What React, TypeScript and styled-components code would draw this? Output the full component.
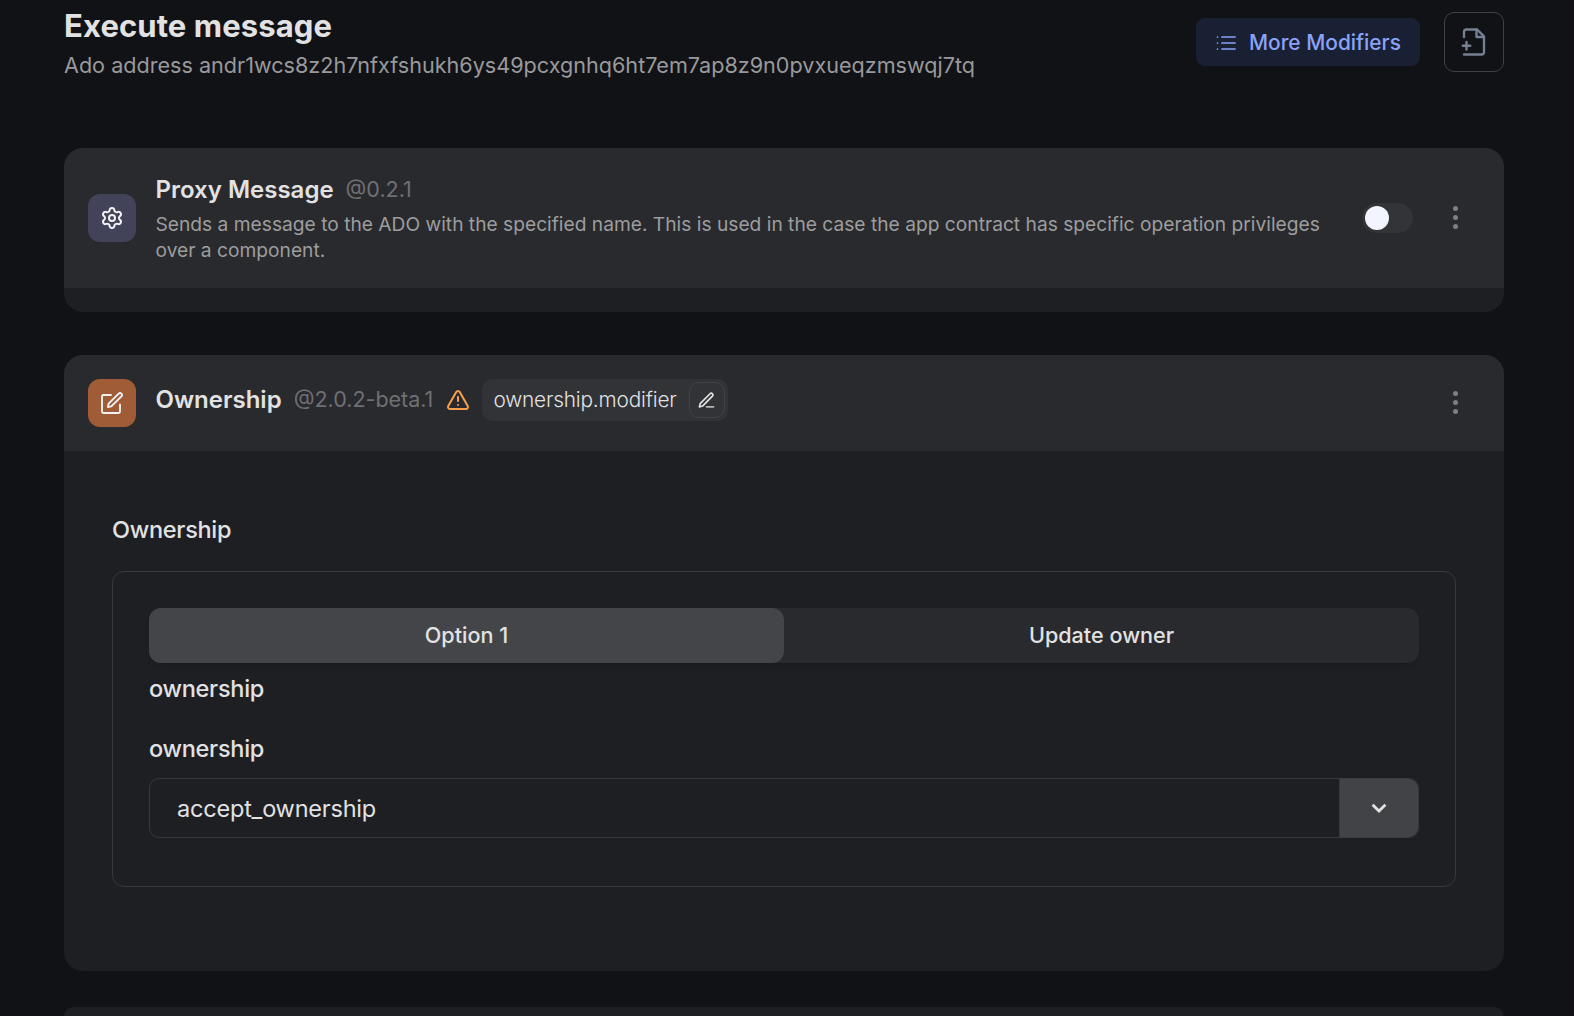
import React from "react";
import styled, { createGlobalStyle } from "styled-components";
import { Settings, TriangleAlert } from "lucide-react";

const GlobalStyle = createGlobalStyle`
  *, *::before, *::after { box-sizing: border-box; }
  html, body { margin: 0; background: #111216; }
  body {
    font-family: Inter, "Liberation Sans", sans-serif;
    color: #e2e2e3;
    overflow: hidden;
    -webkit-font-smoothing: antialiased;
  }
  button { font: inherit; color: inherit; border: 0; padding: 0; background: none; }
`;

const Page = styled.main`
  width: 1574px;
  height: 1016px;
  padding: 0 70px 0 64px;
  overflow: hidden;
`;

const TopBar = styled.header`
  display: flex;
  justify-content: space-between;
  height: 148px;
`;

const Heading = styled.h1`
  margin: 6px 0 0;
  font-size: 31px;
  line-height: 40px;
  font-weight: 700;
  letter-spacing: 0.1px;
`;

const Address = styled.p`
  margin: 3px 0 0;
  font-size: 21.6px;
  line-height: 32px;
  color: #99999b;
`;

const Actions = styled.div`
  display: flex;
  align-items: center;
  gap: 24px;
  height: 60px;
  margin-top: 12px;
`;

const ModifiersButton = styled.button`
  display: flex;
  align-items: center;
  width: 224px;
  height: 48px;
  padding: 1px 0 0 18px;
  gap: 11px;
  border-radius: 9px;
  background: #1a2033;
  color: #8aa3f9;
  font-size: 20.9px;
  font-weight: 500;
  white-space: nowrap;
`;

const OutlineButton = styled.button<{ $size: number; $tone: string }>`
  display: grid;
  place-items: center;
  flex: none;
  width: ${(p) => p.$size}px;
  height: ${(p) => p.$size}px;
  border: 1px solid #404145;
  border-radius: 10px;
  color: ${(p) => p.$tone};
`;

const Card = styled.section<{ $height: number; $gap: number; $radius?: number }>`
  height: ${(p) => p.$height}px;
  margin-bottom: ${(p) => p.$gap}px;
  border-radius: ${(p) => p.$radius ?? 19}px;
  background: #1e1f23;
  overflow: hidden;
`;

const CardHeader = styled.div<{ $height: number }>`
  display: flex;
  align-items: center;
  height: ${(p) => p.$height}px;
  padding: 0 39px 0 24px;
  background: #292a2d;
`;

const Tile = styled.div<{ $color: string }>`
  display: grid;
  place-items: center;
  flex: none;
  width: 48px;
  height: 48px;
  margin-right: 19.5px;
  border-radius: 12px;
  background: ${(p) => p.$color};
  color: #f1f1f4;
`;

const CardText = styled.div`
  flex: 1;
  min-width: 0;
`;

const NameRow = styled.div<{ $height: number; $lift?: number }>`
  display: flex;
  align-items: center;
  height: ${(p) => p.$height}px;
  margin-bottom: ${(p) => p.$lift ?? 0}px;
`;

const Name = styled.h2`
  margin: 0;
  font-size: 24px;
  line-height: 32px;
  font-weight: 600;
`;

const Version = styled.span`
  margin-left: 12px;
  padding-bottom: 2px;
  font-size: 21.5px;
  line-height: 32px;
  color: #6f7073;
`;

const Warning = styled(TriangleAlert)`
  flex: none;
  margin-left: 12.5px;
  color: #f6a04d;
`;

const Pill = styled.div`
  display: flex;
  align-items: center;
  justify-content: space-between;
  width: 246px;
  height: 42px;
  margin-left: 12px;
  padding: 0 3px 0 11.5px;
  border-radius: 10px;
  background: #323336;
  font-size: 20.8px;
  font-weight: 300;
  letter-spacing: -0.17px;
`;

const PillText = styled.span`
  padding-bottom: 1px;
`;

const Description = styled.p`
  margin: 0;
  font-size: 19.2px;
  line-height: 26px;
  color: #9d9d9f;
  white-space: nowrap;
`;

const Toggle = styled.button`
  display: flex;
  align-items: center;
  flex: none;
  width: 51px;
  height: 30px;
  margin-right: 33px;
  padding-left: 3px;
  border-radius: 15px;
  background: #333437;
`;

const Knob = styled.span`
  width: 24px;
  height: 24px;
  border-radius: 50%;
  background: #f2f4ff;
`;

const MenuButton = styled.button`
  display: flex;
  flex-direction: column;
  align-items: center;
  gap: 4px;
  width: 19px;
  padding-bottom: 1px;
`;

const Dot = styled.span`
  width: 5px;
  height: 5px;
  border-radius: 50%;
  background: #7e7f81;
`;

const CardBody = styled.div`
  padding: 63px 48px 0;
`;

const Label = styled.div`
  height: 32px;
  font-size: 23.5px;
  line-height: 32px;
  font-weight: 500;
  letter-spacing: -0.28px;
`;

const Fieldset = styled.div`
  height: 316px;
  margin-top: 25px;
  padding: 36px;
  border: 1px solid #38393c;
  border-radius: 12px;
`;

const Tabs = styled.div`
  display: grid;
  grid-template-columns: 1fr 1fr;
  height: 55px;
  margin-bottom: 10px;
  border-radius: 12px;
  background: #292a2d;
  box-shadow: 0 4px 5px -1px rgba(0, 0, 0, 0.12);
`;

const Tab = styled.button<{ $active?: boolean }>`
  padding-bottom: 1px;
  border-radius: 12px;
  background: ${(p) => (p.$active ? "#444548" : "transparent")};
  font-size: 21.6px;
  font-weight: 500;
`;

const FieldLabel = styled(Label)`
  margin-top: 28px;
`;

const Select = styled.div`
  display: flex;
  height: 60px;
  margin-top: 13px;
  border: 1px solid #38393c;
  border-radius: 10px;
  overflow: hidden;
`;

const Value = styled.span`
  flex: 1;
  padding-left: 27px;
  font-size: 23.5px;
  line-height: 60px;
  letter-spacing: -0.2px;
`;

const Caret = styled.span`
  display: grid;
  place-items: center;
  width: 79px;
  border-left: 1px solid #38393c;
  background: #424346;
`;

const Stroke = styled.svg`
  display: block;
  flex: none;
  fill: none;
  stroke: currentColor;
  stroke-linecap: round;
  stroke-linejoin: round;
`;

const More = () => (
  <MenuButton aria-label="More">
    <Dot />
    <Dot />
    <Dot />
  </MenuButton>
);

export default function App() {
  return (
    <>
      <GlobalStyle />
      <Page>
        <TopBar>
          <div>
            <Heading>Execute message</Heading>
            <Address>Ado address andr1wcs8z2h7nfxfshukh6ys49pcxgnhq6ht7em7ap8z9n0pvxueqzmswqj7tq</Address>
          </div>
          <Actions>
            <ModifiersButton>
              <Stroke width="24" height="24" viewBox="0 0 24 24" strokeWidth="1.7">
                <path d="M8 6h13M8 12h13M8 18h13M3.5 6h.01M3.5 12h.01M3.5 18h.01" />
              </Stroke>
              More Modifiers
            </ModifiersButton>
            <OutlineButton $size={60} $tone="#768094" aria-label="Import">
              <Stroke width="30" height="30" viewBox="0 0 24 24" strokeWidth="1.9">
                <path d="M4 22h14a2 2 0 0 0 2-2V7.5L14.5 2H6a2 2 0 0 0-2 2v4" />
                <path d="M14 2v6h6M3 15h6M6 12v6" />
              </Stroke>
            </OutlineButton>
          </Actions>
        </TopBar>

        <Card $height={164} $gap={43}>
          <CardHeader $height={140}>
            <Tile $color="#424359">
              <Settings size={24} />
            </Tile>
            <CardText>
              <NameRow $height={32} $lift={5}>
                <Name>Proxy Message</Name>
                <Version>@0.2.1</Version>
              </NameRow>
              <Description>
                Sends a message to the ADO with the specified name. This is used in the case the app contract has specific operation privileges
                <br />
                over a component.
              </Description>
            </CardText>
            <Toggle aria-label="Enable">
              <Knob />
            </Toggle>
            <More />
          </CardHeader>
        </Card>

        <Card $height={616} $gap={36}>
          <CardHeader $height={96}>
            <Tile $color="#a05c37">
              <Stroke width="24" height="24" viewBox="0 0 24 24" strokeWidth="1.9">
                <path d="M11 4H3.5A1.5 1.5 0 0 0 2 5.5v15A1.5 1.5 0 0 0 3.5 22h15a1.5 1.5 0 0 0 1.5-1.5V13.5" />
                <path d="M18.7 2.6a1.9 1.9 0 0 1 2.7 2.7L11.3 15.4 8 16l.6-3.3z" />
              </Stroke>
            </Tile>
            <CardText>
              <NameRow $height={42} $lift={6}>
                <Name>Ownership</Name>
                <Version>@2.0.2-beta.1</Version>
                <Warning size={24} />
                <Pill>
                  <PillText>ownership.modifier</PillText>
                  <OutlineButton $size={36} $tone="#e3e3e4" aria-label="Rename">
                    <Stroke width="19" height="19" viewBox="0 0 24 24" strokeWidth="2.1">
                      <path d="M12 20h9" opacity="0.75" />
                      <path d="M16.5 3.5a2.12 2.12 0 0 1 3 3L7 19l-4 1 1-4Z" />
                    </Stroke>
                  </OutlineButton>
                </Pill>
              </NameRow>
            </CardText>
            <More />
          </CardHeader>
          <CardBody>
            <Label>Ownership</Label>
            <Fieldset>
              <Tabs>
                <Tab $active>Option 1</Tab>
                <Tab>Update owner</Tab>
              </Tabs>
              <Label>ownership</Label>
              <FieldLabel>ownership</FieldLabel>
              <Select>
                <Value>accept_ownership</Value>
                <Caret>
                  <Stroke width="16" height="11" viewBox="0 0 16 11" strokeWidth="2.8">
                    <path d="M1.6 1.7 8 8.1 14.4 1.7" strokeLinecap="butt" strokeLinejoin="miter" />
                  </Stroke>
                </Caret>
              </Select>
            </Fieldset>
          </CardBody>
        </Card>

        <Card $height={60} $gap={0} $radius={10} />
      </Page>
    </>
  );
}
